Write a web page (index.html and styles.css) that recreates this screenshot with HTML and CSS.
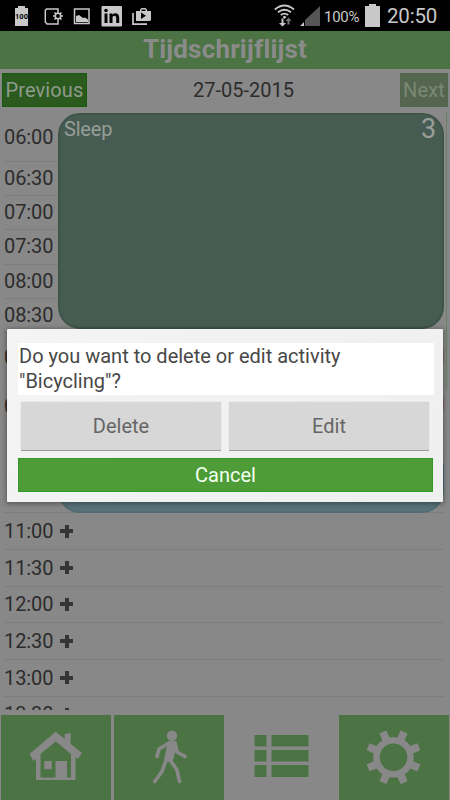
FILE: index.html
```html
<!DOCTYPE html>
<html lang="nl">
<head>
<meta charset="utf-8">
<title>Tijdschrijflijst</title>
<link rel="stylesheet" href="styles.css">
</head>
<body>
<div class="screen">
  <div class="status">
    <svg class="status-icons" width="160" height="31" viewBox="0 0 160 31">
      <path fill="#c8c8c8" d="M15 8h3V6h7v2h3v18H15z"/>
      <text x="21.500" y="19" text-anchor="middle" class="battery-text">100</text>
      <path fill="none" stroke="#c8c8c8" stroke-width="1.500" d="M58 11V9H46.500L45.300 10.200V22L47 24H58V21"/>
      <circle cx="58" cy="16" r="2.700" fill="none" stroke="#c8c8c8" stroke-width="1.500"/>
      <path stroke="#c8c8c8" stroke-width="1.500" d="M58 11v2M58 19v2M53 16h2M61 16h2M54.500 12.500l1.400 1.400M60.100 18.100l1.400 1.400M54.500 19.500l1.400-1.400M60.100 13.900l1.400-1.400"/>
      <rect x="74.500" y="9" width="14.500" height="14.500" fill="none" stroke="#c8c8c8" stroke-width="1.500"/>
      <path fill="#c8c8c8" d="M76 22v-6l3-1 4 3 2-.5 3 2V22z"/>
      <rect x="101.500" y="6" width="20.500" height="20.500" rx="1" fill="#c8c8c8"/>
      <path fill="#000" d="M104.500 13.500h3v9.500h-3zM109.500 13.500h2.900v1.300c1.500-2.300 6.800-2.200 6.800 2.600V23h-3v-5c0-3.200-3.700-3-3.700 0v5h-3z"/>
      <circle cx="106" cy="10.500" r="1.800"/>
      <path fill="none" stroke="#c8c8c8" stroke-width="1.700" d="M133 13v11.200h14"/>
      <path fill="#c8c8c8" fill-rule="evenodd" d="M136 11h4V9.500l1.500-1.500h4L147 9.500V11h4v9l-1 1h-14zM141.500 9.500V11h4V9.500zM141 12.500v6.500l5-3.200z"/>
    </svg>
    <svg class="status-icons" width="50" height="31" viewBox="0 0 50 31">
      <g fill="none" stroke="#c8c8c8" stroke-width="1.900"><path d="M.8 9.500Q10.500 1.500 20 9.500"/><path d="M4 12.200q6.500-5 13 0"/><path d="M6.800 15q3.700-2.700 7.400 0"/></g>
      <path fill="#c8c8c8" d="M8.500 17l2-1.200 2 1.200-2 2zM7.500 18.500h2V23H12l-3.500 3.500L5 23h2.500z"/>
      <path fill="#777" d="M14.500 17.500l3 3.500H15.500v3.500h-2V21h-2z"/>
      <path fill="#555" d="M46 6v20H31V20z"/><path fill="#c8c8c8" d="M30 22v4h-4z"/>
    </svg>
    <span class="percent">100%</span>
    <svg class="battery" width="15" height="23" viewBox="0 0 15 23"><path fill="#c8c8c8" d="M0 2h4V0h7v2h4v21H0z"/></svg>
    <span class="clock">20:50</span>
  </div>
  <header class="title"><span>Tijdschrijflijst</span></header>
  <nav class="days">
    <span class="day-button">Previous</span>
    <span class="date">27-05-2015</span>
    <span class="day-button disabled">Next</span>
  </nav>
  <main class="schedule">
    <div class="times">
      <div class="slot first">06:00</div>
      <div class="slot">06:30</div>
      <div class="slot">07:00</div>
      <div class="slot">07:30</div>
      <div class="slot">08:00</div>
      <div class="slot">08:30</div>
      <div class="slot tall">09:00</div>
      <div class="slot tall">09:30</div>
      <div class="slot tall"></div>
      <div class="slot"></div>
      <div class="slot free">11:00<i class="plus"></i></div>
      <div class="slot free">11:30<i class="plus"></i></div>
      <div class="slot free">12:00<i class="plus"></i></div>
      <div class="slot free">12:30<i class="plus"></i></div>
      <div class="slot free">13:00<i class="plus"></i></div>
      <div class="slot free">13:30<i class="plus"></i></div>
    </div>
    <div class="activities">
      <div class="activity sleep"><span>Sleep</span><span class="count">3</span></div>
      <div class="activity pink"></div>
      <div class="activity pink"></div>
      <div class="activity blue"></div>
    </div>
    <div class="scrollbar"></div>
  </main>
  <footer class="tabs">
    <div class="tab"><svg width="110" height="85" viewBox="0 0 110 85"><path fill="#888" fill-rule="evenodd" d="M54.700 16.800l9 7.200v-5l6-1v11l11.300 9-4 6-2.500-2v23H35V44l-2.500 2-4-7zM54.700 26.500L39.500 39v23.500h15V46h11.500v16.500h4V39zM43.300 46h7.500v8.300h-7.500z"/></svg></div>
    <div class="tab"><svg width="110" height="85" viewBox="0 0 110 85"><circle cx="58" cy="20.700" r="5.200" fill="#888"/><path fill="#888" d="M54 26h6l3 2-4 18-6 1-3-2z"/><g fill="none" stroke="#888" stroke-width="3.700" stroke-linecap="round" stroke-linejoin="round"><path d="M55 28l-10 6-2 7.500"/><path d="M61 28l2 9 8 4.500"/><path d="M52 45l-4 11.500-7.300 10"/><path d="M56 45l7 10 2.500 11.500"/></g></svg></div>
    <div class="tab active"><svg width="110" height="85" viewBox="0 0 110 85"><path fill="#4c7344" d="M28.500 20h12v11.500h-12zm17 0h37v11.500h-37zM28.500 35h12v11.500h-12zm17 0h37v11.500h-37zM28.500 50h12v12h-12zm17 0h37v12h-37z"/></svg></div>
    <div class="tab"><svg width="110" height="85" viewBox="0 0 110 85"><g transform="translate(54.500 42.300) rotate(22.500)" fill="#888"><circle r="17" fill="none" stroke="#888" stroke-width="6.500"/><g id="teeth"><path d="M-4-19l.3-8.500h7.400l.3 8.500zM-4 19l.3 8.500h7.400l.3-8.500zM-19-4l-8.500.3v7.400l8.500.3zM19-4l8.500.3v7.400l-8.500.3z"/></g><use href="#teeth" transform="rotate(45)"/></g></svg></div>
  </footer>
  <section class="dialog" role="dialog">
    <p class="message">Do you want to delete or edit activity<br>"Bicycling"?</p>
    <div class="choices"><div class="choice">Delete</div><div class="choice">Edit</div></div>
    <div class="cancel">Cancel</div>
  </section>
</div>
</body>
</html>
```
FILE: styles.css
```css
* { box-sizing: border-box; }
body { margin: 0; background: #888; font-family: Roboto, sans-serif; font-size: 20px; color: #2c2c2c; font-variant-ligatures: none; }
.screen { position: relative; width: 450px; height: 800px; overflow: hidden; display: flex; flex-direction: column; }
.status { height: 31px; flex: none; background: #000; color: #c8c8c8; display: flex; align-items: center; }
.status-icons { flex: none; }
.status-icons + .status-icons { margin-left: 114px; }
.battery-text { font-size: 7.500px; font-weight: 700; fill: #000; }
.percent { font-size: 15px; width: 37px; margin-top: 2px; white-space: nowrap; letter-spacing: -.3px; }
.battery { margin-left: 4px; flex: none; }
.clock { font-size: 20.500px; margin-left: 7px; margin-top: 1px; letter-spacing: -.2px; }
.title { height: 38px; flex: none; background: #4c7344; color: #8b8b8b; font-size: 26px; font-weight: 700; line-height: 37px; letter-spacing: .2px; text-align: center; }
.days { height: 41px; flex: none; padding: 4px 2px 3px; display: flex; justify-content: space-between; }
.day-button { width: 85px; height: 34px; background: #2a5a1e; border: 1px solid #185c09; color: #909b8d; text-align: center; line-height: 33px; letter-spacing: .1px; }
.day-button.disabled { width: 48px; background: #556650; border-color: #52674a; color: #7a8975; }
.date { line-height: 35px; }
.schedule { height: 600px; flex: none; display: grid; grid-template-columns: 58px 386px 6px; overflow: hidden; }
.times { grid-area: 1 / 1 / 2 / 3; padding-left: 4px; }
.slot { height: 34.200px; border-bottom: 1px solid #7d7d7d; line-height: 33px; letter-spacing: -.1px; }
.slot.first { height: 52px; line-height: 54px; }
.slot.tall { height: 48.700px; line-height: 48px; }
.slot.free { height: 36.700px; line-height: 36px; display: flex; align-items: center; }
.plus { width: 13px; height: 13px; margin-left: 7px; background: linear-gradient(#353535, #353535) center / 13px 4px no-repeat, linear-gradient(#353535, #353535) center / 4px 13px no-repeat; }
.activities { grid-area: 1 / 2; padding-top: 3px; }
.activity { border: 2px solid #3f554a; border-radius: 22px; }
.sleep { height: 216px; background: #465b51; color: #989e98; display: flex; justify-content: space-between; padding: 2px 6px 0 4px; line-height: 24px; letter-spacing: -.2px; }
.count { font-size: 27px; }
.pink { height: 48px; margin-top: 3px; background: #856a6f; border-color: #79656a; border-radius: 22px; }
.pink + .pink { margin-top: 0; }
.blue { height: 67px; margin-top: 18px; background: #5a737b; border-color: #526c75; }
.scrollbar { grid-area: 1 / 3; width: 1px; height: 278px; margin: 2px 0 0 2px; background: #6c8068; }
.tabs { height: 85px; margin-top: 5px; flex: none; display: grid; grid-template-columns: repeat(4, 110px); gap: 2.700px; padding-left: 1px; }
.tab { height: 85px; background: #4c7344; }
.tab.active { background: #888; }
.tab svg { display: block; }
.dialog { position: absolute; left: 7px; top: 329px; width: 436px; height: 173px; background: linear-gradient(135deg, #f4f4f4, #efefef); border-radius: 1px; padding: 14px 9px 0 11px; box-shadow: 0 1px 5px 1px rgba(0,0,0,.35); }
.message { margin: 0; height: 52px; background: #fff; padding: 1px 1px; line-height: 24.500px; color: #484848; }
.choices { display: grid; grid-template-columns: 200px 200px; gap: 8px; margin: 7px 0 0 3px; }
.choice { height: 48px; line-height: 48px; text-align: center; background: #d7d7d7; color: #666; box-shadow: 0 1px 0 #999, 0 0 1px #aaa; border-radius: 1px; }
.cancel { width: 415px; height: 34px; margin-top: 8px; background: #4d9c37; border: 1px solid #309b23; color: #f2fff0; text-align: center; line-height: 32px; }
```
